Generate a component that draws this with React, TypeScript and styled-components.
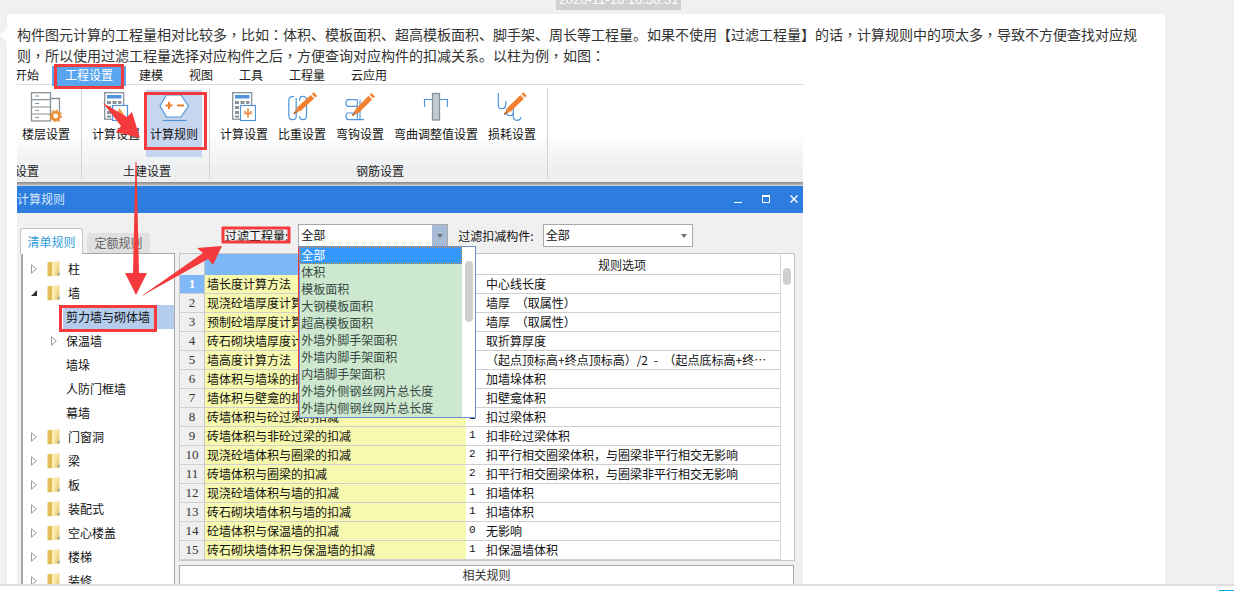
import React from "react";
import styled, { createGlobalStyle } from "styled-components";

const GlobalStyle = createGlobalStyle`
  html, body {
    margin: 0;
    padding: 0;
    background: #f0f0f0;
  }
  * {
    box-sizing: border-box;
  }
`;

const Page = styled.div`
  display: flex;
  flex-direction: column;
  width: 1234px;
  height: 591px;
  overflow: hidden;
  background: #f0f0f0;
  font-family: "Noto Sans CJK SC", "Liberation Sans", sans-serif;
`;

const Stamp = styled.div`
  flex: none;
  width: 125px;
  height: 20px;
  margin: -10px 0 4px 556px;
  background: #d0d0d0;
  color: #fff;
  font: 13px/20px "Liberation Sans", sans-serif;
  text-align: center;
`;

const Bubble = styled.div`
  position: relative;
  flex: 1;
  min-height: 0;
  display: flex;
  flex-direction: column;
  width: 1158px;
  margin-left: 7px;
  padding: 10px 10px 0;
  background: #fff;
  border-radius: 3px 3px 0 0;

  &::before {
    content: "";
    position: absolute;
    left: -7px;
    top: 14px;
    border-style: solid;
    border-width: 7px 7px 7px 0;
    border-color: transparent #fff transparent transparent;
  }
`;

const Paragraph = styled.p`
  flex: none;
  margin: 0;
  color: #333;
  font-size: 14px;
  line-height: 21px;
  white-space: nowrap;
`;

// the reference sets its commas and colons mid-cell, the other marks low-left
const Mid = styled.span`
  font-family: "Noto Sans CJK TC", sans-serif;
`;

const Shot = styled.div`
  position: relative;
  flex: 1;
  min-height: 0;
  width: 786px;
`;

const ShotClip = styled.div`
  display: flex;
  flex-direction: column;
  height: 100%;
  overflow: hidden;
  color: #111;
  font-size: 12px;
  line-height: 16px;
  white-space: nowrap;
`;

const Marks = styled.svg`
  position: absolute;
  left: 0;
  top: 0;
  overflow: visible;
  pointer-events: none;
`;

const Menu = styled.div`
  flex: none;
  display: flex;
  height: 18px;
  margin-left: -15px;
`;

const MenuItem = styled.div<{ $active?: boolean }>`
  height: ${({ $active }) => ($active ? "20px" : "18px")};
  padding: 1px 13px;
  position: relative;
  background: ${({ $active }) => ($active ? "#5aa5f0" : "transparent")};
  color: ${({ $active }) => ($active ? "#fff" : "#222")};
`;

const Ribbon = styled.div`
  flex: none;
  display: flex;
  height: 98px;
  border-top: 1px solid #dcdcdc;
  background: linear-gradient(#fff 0%, #fff 50%, #edeff0 85%, #edeff0 100%);
`;

const RibbonGroup = styled.div<{ $width: number; $pad?: number }>`
  display: flex;
  flex-direction: column;
  width: ${({ $width }) => $width}px;
  padding-left: ${({ $pad }) => $pad ?? 5}px;
  overflow: hidden;
  position: relative;

  &::after {
    content: "";
    position: absolute;
    right: 0;
    top: 3px;
    bottom: 3px;
    width: 1px;
    background: #d2d4d4;
  }
`;

const Tools = styled.div`
  display: flex;
  flex: none;
`;

const Tool = styled.div<{ $active?: boolean }>`
  height: 67px;
  margin: 5px 1px 0;
  padding: 2px 4px 0;
  display: flex;
  flex-direction: column;
  align-items: center;
  background: ${({ $active }) => ($active ? "#c6d6ef" : "transparent")};

  svg {
    flex: none;
    height: 30px;
    margin-bottom: 4px;
  }
`;

const GroupLabel = styled.div<{ $offset?: number }>`
  margin-top: auto;
  margin-bottom: 3px;
  margin-left: ${({ $offset }) => $offset ?? 0}px;
  line-height: 16px;
  color: #222;
`;

const RibbonEdge = styled.div`
  flex: none;
  height: 4px;
  background: linear-gradient(#8a8a8a, #b4b4b4 70%, #dfe4ec);
`;

const TitleBar = styled.div`
  flex: none;
  display: flex;
  align-items: center;
  gap: 20px;
  height: 27px;
  padding: 0 5px 1px 0;
  background: #2d7de0;
  color: #dbe9fa;
`;

const TitleText = styled.div`
  margin-right: auto;
`;

const Dialog = styled.div`
  flex: 1;
  min-height: 0;
  display: flex;
  background: #f0f0f0;
`;

const LeftPane = styled.div`
  flex: none;
  display: flex;
  flex-direction: column;
  width: 162px;
  padding-top: 15px;
`;

const TabBar = styled.div`
  flex: none;
  display: flex;
  align-items: flex-end;
  gap: 4px;
  height: 25px;
  margin-left: 3px;
`;

const Tab = styled.div<{ $active?: boolean }>`
  width: 63px;
  height: ${({ $active }) => ($active ? "26px" : "20px")};
  margin-bottom: ${({ $active }) => ($active ? "-1px" : "0")};
  position: relative;
  z-index: ${({ $active }) => ($active ? 1 : 0)};
  text-align: center;
  line-height: ${({ $active }) => ($active ? "26px" : "20px")};
  border-radius: 3px 3px 0 0;
  background: ${({ $active }) => ($active ? "#fff" : "#e0e0e0")};
  border: ${({ $active }) => ($active ? "1px solid #c4c4c4" : "none")};
  border-bottom: none;
  color: ${({ $active }) => ($active ? "#2f9bd8" : "#666")};
`;

const Tree = styled.div`
  flex: 1;
  min-height: 0;
  width: 154px;
  margin-left: 4px;
  padding-top: 3px;
  overflow: hidden;
  background: #fff;
  border: 1px solid #a8a8a8;
  border-left-width: 2px;
  border-bottom: none;
`;

const TreeRow = styled.div<{ $child?: boolean }>`
  display: flex;
  align-items: center;
  height: 24px;
  padding-left: ${({ $child }) => ($child ? "28px" : "8px")};
`;

const Expander = styled.span<{ $child?: boolean }>`
  flex: none;
  display: flex;
  align-items: center;
  width: ${({ $child }) => ($child ? "12px" : "16px")};
`;

const TreeText = styled.span<{ $selected?: boolean; $child?: boolean }>`
  flex: 1;
  align-self: stretch;
  line-height: 24px;
  padding-left: ${({ $child }) => ($child ? "3px" : "8px")};
  background: ${({ $selected }) => ($selected ? "#b4cdec" : "transparent")};
`;

const RightPane = styled.div`
  flex: none;
  display: flex;
  flex-direction: column;
  width: 616px;
`;

const FilterRow = styled.div`
  flex: none;
  display: flex;
  align-items: center;
  height: 23px;
  margin: 11px 0 6px;
  padding-left: 46px;
`;

const FilterLabel = styled.span<{ $gap: number }>`
  margin-right: ${({ $gap }) => $gap}px;
`;

const Combo = styled.div<{ $gap?: number }>`
  position: relative;
  display: flex;
  align-items: center;
  width: 150px;
  height: 23px;
  margin-right: ${({ $gap }) => $gap ?? 0}px;
  padding: 0 0 1px 2px;
  background: #fff;
  border: 1px solid #a9a9a9;
`;

const ComboArrow = styled.span<{ $open?: boolean }>`
  position: absolute;
  right: 0;
  top: 0;
  bottom: 0;
  width: 15px;
  display: flex;
  align-items: center;
  justify-content: center;
  background: ${({ $open }) => ($open ? "#a8bcd8" : "transparent")};

  &::after {
    content: "";
    border-style: solid;
    border-width: 4px 3.5px 0;
    border-color: #6f6f6f transparent transparent;
  }
`;

const DropDown = styled.div`
  position: absolute;
  z-index: 2;
  left: 0;
  top: 21px;
  display: flex;
  width: 177px;
  height: 172px;
  background: #fff;
  border: 1px solid #6a8fd5;
`;

const DropList = styled.div`
  width: 162px;
  overflow: hidden;
  background: #cce8cf;
`;

const DropItem = styled.div<{ $selected?: boolean }>`
  height: 17px;
  padding-left: 1px;
  line-height: 16px;
  color: ${({ $selected }) => ($selected ? "#fff" : "#3a4a44")};
  background: ${({ $selected }) => ($selected ? "#3399ff" : "transparent")};
  outline: ${({ $selected }) => ($selected ? "1px dotted #d98a3a" : "none")};
  outline-offset: -1px;
`;

const DropThumb = styled.div`
  width: 8px;
  height: 61px;
  margin: 14px 0 0 3px;
  border-radius: 4px;
  background: #cfcfcf;
`;

const GridBox = styled.div`
  flex: none;
  display: flex;
  height: 308px;
  background: #fff;
  border: 1px solid #c6c6c6;
`;

const GridBody = styled.div`
  flex: 1;
`;

const GridRow = styled.div<{ $header?: boolean }>`
  display: grid;
  grid-template-columns: 25px 261px 10px 304px;
  height: ${({ $header }) => ($header ? "21px" : "19px")};
  line-height: 17px;
  border-bottom: 1px solid #cfcfcf;
`;

const NumCell = styled.div<{ $current?: boolean }>`
  text-align: center;
  line-height: 18px;
  border-right: 1px solid #c6c6c6;
  background: ${({ $current }) => ($current ? "#7fb8f7" : "#efefef")};
  color: ${({ $current }) => ($current ? "#fff" : "#333")};
  font-weight: ${({ $current }) => ($current ? 700 : 400)};
  font-family: "Liberation Serif", serif;
  font-size: 13px;
`;

const NameCell = styled.div`
  padding-left: 2px;
  background: #f7f9ae;
  overflow: hidden;
`;

const HeaderBlue = styled.div`
  grid-column: span 2;
  background: #7fb8f7;
`;

const HeaderOption = styled.div`
  padding-right: 12px;
  line-height: 22px;
  text-align: center;
  color: #222;
`;

const ValueCell = styled.div`
  padding-left: 3px;
  font-family: "Liberation Mono", monospace;
  font-size: 11px;
`;

const OptionCell = styled.div`
  padding-left: 10px;
  word-spacing: 3px;
  overflow: hidden;
`;

const GridScroll = styled.div`
  flex: none;
  width: 14px;
  border-left: 1px solid #d8d8d8;
`;

const GridThumb = styled.div`
  width: 8px;
  height: 17px;
  margin: 14px 0 0 2px;
  border-radius: 4px;
  background: #cfcfcf;
`;

const RelatedButton = styled.div`
  flex: none;
  height: 24px;
  width: 615px;
  margin-top: 4px;
  line-height: 18px;
  text-align: center;
  color: #333;
  background: #fff;
  border: 1px solid #a9a9a9;
`;

const Footer = styled.div`
  flex: none;
  display: flex;
  justify-content: flex-end;
  align-items: flex-end;
  height: 7px;
  background: #fff;
  border-top: 2px solid #dedede;
`;

const FooterMark = styled.div`
  width: 15px;
  height: 1px;
  background: #00a8e8;
`;

const BLUE = "#4f94dc";
const ORANGE = "#f08030";
const GREY = "#87929a";

const Pencil = ({ x1, y1, x2, y2 }: { x1: number; y1: number; x2: number; y2: number }) => {
  const at = (t: number) => ({ x: x1 + (x2 - x1) * t, y: y1 + (y2 - y1) * t });
  const neck = at(0.1);
  const waist = at(0.84);
  const cap = at(0.9);
  const tip = at(-0.14);
  return (
    <g>
      <line x1={neck.x} y1={neck.y} x2={waist.x} y2={waist.y} stroke={ORANGE} strokeWidth={5} />
      <line x1={cap.x} y1={cap.y} x2={x2} y2={y2} stroke={ORANGE} strokeWidth={5} />
      <line x1={x1} y1={y1} x2={neck.x} y2={neck.y} stroke={ORANGE} strokeWidth={3.5} />
      <line x1={x1} y1={y1} x2={tip.x} y2={tip.y} stroke="#b5652c" strokeWidth={1.8} />
    </g>
  );
};

const TableIcon = () => (
  <svg width="32" height="30" viewBox="0 0 32 30" fill="none">
    <path d="M21 6.500h8.500v15" stroke={GREY} strokeWidth="1.300" />
    <rect x="1.500" y="0.700" width="19" height="28.300" fill="#fff" stroke={GREY} strokeWidth="1.300" />
    <path d="M1.500 7.700h19M1.500 15h19M1.500 22h19" stroke={GREY} strokeWidth="1.200" />
    <path d="M5 4h4M5 11.500h4M5 18.500h4M5 25.500h4" stroke={GREY} strokeWidth="1.200" />
    <circle cx="25.700" cy="24" r="3.800" stroke="#e98f33" strokeWidth="2.800" />
    <circle cx="25.700" cy="24" r="6" stroke="#e98f33" strokeWidth="1.200" strokeDasharray="2 2.700" />
  </svg>
);

const CalcBody = ({ x }: { x: number }) => (
  <g transform={`translate(${x} 0)`}>
    <rect x="0.700" y="0.700" width="19" height="26.500" fill="#fff" stroke={GREY} strokeWidth="1.300" />
    <rect x="3" y="3" width="14.500" height="3.500" fill={BLUE} />
    <path d="M3 9h4v3H3zM8.500 9h4v3h-4zM14 9h3.500v3H14zM3 14h4v3H3zM8.500 14h4v3h-4zM3 19h4v3H3zM3 23.500h4v2H3z" fill={GREY} />
  </g>
);

const CalcIcon = () => (
  <svg width="26" height="30" viewBox="0 0 26 30" fill="none">
    <CalcBody x={1} />
    <rect x="9.500" y="13.500" width="15" height="15" fill="#fff" stroke={BLUE} strokeWidth="1.200" />
    <path d="M12 27c-1-4 3-5 4-11 3 3 6 6 5 11z" fill="#f29a4a" />
    <path d="M15 27c0-2 1-3 2-5 1 2 2 3 1.500 5z" fill="#fbe2b8" />
  </svg>
);

const RuleIcon = () => (
  <svg width="30" height="30" viewBox="0 0 30 30" fill="none">
    <path d="M1 14 7.500 3H22l7.500 11L22 25H7.500z" fill="#fff" stroke={BLUE} strokeWidth="1.200" />
    <path d="M6.500 13.500h7M10 10v7M18 13.500h7" stroke={ORANGE} strokeWidth="2" />
    <path d="M3.500 28.500h24" stroke={BLUE} strokeWidth="1.200" />
  </svg>
);

const CalcLinkIcon = () => (
  <svg width="24" height="30" viewBox="0 0 24 30" fill="none">
    <CalcBody x={0} />
    <rect x="8.500" y="13.500" width="15" height="15" fill="#fff" stroke={BLUE} strokeWidth="1.200" />
    <path d="M16 16.500v9M13 19v2.500h6V19" stroke={ORANGE} strokeWidth="1.500" />
  </svg>
);

const DensityIcon = () => (
  <svg width="29" height="30" viewBox="0 0 29 30" fill="none">
    <path d="M6 4.300C3 4.300 0.800 5.500 0.800 8.700v14c0 3 1.500 5 3.700 5s3.700-1 3.700-3.400V6" stroke={BLUE} strokeWidth="1.200" />
    <path d="M11.500 8.700c0-3 1-4.400 3-4.400s4 1.400 4 3.400v16.600c0 2.400-1.500 3.400-3.300 3.400s-3.700-1-3.700-3.400" stroke={BLUE} strokeWidth="1.200" />
    <Pencil x1={8.500} y1={19.300} x2={27.500} y2={2} />
  </svg>
);

const HookIcon = () => (
  <svg width="30" height="30" viewBox="0 0 30 30" fill="none">
    <path d="M12.300 7.700H3.300C1.800 7.700 1 9.500 1 11s0.800 3.300 2.300 3.300h9" stroke={BLUE} strokeWidth="1.200" />
    <path d="M12.300 21H3.300C1.800 21 1 22.700 1 24.300s0.800 3.400 2.300 3.400H19" stroke={BLUE} strokeWidth="1.200" />
    <path d="M12.300 7.700v20M15 7.700v20" stroke={BLUE} strokeWidth="1.100" />
    <Pencil x1={10} y1={21} x2={28.300} y2={2.700} />
  </svg>
);

const BendIcon = () => (
  <svg width="26" height="30" viewBox="0 0 26 30" fill="none">
    <path d="M1.500 15V7.500h23V15" stroke={BLUE} strokeWidth="1.200" />
    <rect x="9.500" y="1.500" width="7" height="26.500" fill="#c3cbd1" stroke={GREY} strokeWidth="1.300" />
  </svg>
);

const LossIcon = () => (
  <svg width="30" height="30" viewBox="0 0 30 30" fill="none">
    <path d="M1.300 1v11.700c0 2.700 1.500 4 3.400 4s4-1.300 4-4V9.300" stroke={BLUE} strokeWidth="1.200" />
    <path d="M9.700 16.700V21c0 1.800 1.500 2.700 3.300 2.700s3.300-0.900 3.300-2.700" stroke={BLUE} strokeWidth="1.200" />
    <path d="M16.300 14.300v10c0 2.400 1.500 4 3.400 4s4-1 4-3" stroke={BLUE} strokeWidth="1.200" />
    <Pencil x1={9.700} y1={20} x2={28} y2={2} />
  </svg>
);

const FolderIcon = () => (
  <svg width="13" height="16" viewBox="0 0 13 16" fill="none">
    <defs>
      <linearGradient id="folderFill" x1="0" y1="0" x2="1" y2="1">
        <stop offset="0" stopColor="#fdf3c0" />
        <stop offset="1" stopColor="#e9c768" />
      </linearGradient>
    </defs>
    <path d="M0.500 1.500 5 0.500v14.500l-4.500 0.500z" fill="#e3bd58" />
    <path d="M5 0.500h7.500V15H5z" fill="url(#folderFill)" />
    <path d="M5 2 8 3v12H5z" fill="#fbeeb0" />
    <path d="M11 12h1.500v2H11z" fill="#5aa5d0" />
  </svg>
);

const Closed = () => (
  <svg width="6" height="10" viewBox="0 0 6 10" fill="none">
    <path d="M0.500 0.800 5.300 5 0.500 9.200z" fill="#fff" stroke="#9a9a9a" />
  </svg>
);

const Opened = () => (
  <svg width="6" height="6" viewBox="0 0 6 6">
    <path d="M6 0v6H0z" fill="#333" />
  </svg>
);

const treeItems = [
  { label: "柱" },
  { label: "墙", open: true },
  { label: "剪力墙与砌体墙", child: true, selected: true, leaf: true },
  { label: "保温墙", child: true },
  { label: "墙垛", child: true, leaf: true },
  { label: "人防门框墙", child: true, leaf: true },
  { label: "幕墙", child: true, leaf: true },
  { label: "门窗洞" },
  { label: "梁" },
  { label: "板" },
  { label: "装配式" },
  { label: "空心楼盖" },
  { label: "楼梯" },
  { label: "装修" },
];

const dropItems = [
  "全部",
  "体积",
  "模板面积",
  "大钢模板面积",
  "超高模板面积",
  "外墙外脚手架面积",
  "外墙内脚手架面积",
  "内墙脚手架面积",
  "外墙外侧钢丝网片总长度",
  "外墙内侧钢丝网片总长度",
];

const rows = [
  ["墙长度计算方法", "", "中心线长度"],
  ["现浇砼墙厚度计算方法", "", "墙厚 （取属性）"],
  ["预制砼墙厚度计算方法", "", "墙厚 （取属性）"],
  ["砖石砌块墙厚度计算方法", "", "取折算厚度"],
  ["墙高度计算方法", "", "（起点顶标高+终点顶标高）/2 - （起点底标高+终…"],
  ["墙体积与墙垛的扣减", "", "加墙垛体积"],
  ["墙体积与壁龛的扣减", "", "扣壁龛体积"],
  ["砖墙体积与砼过梁的扣减", "1", "扣过梁体积"],
  ["砖墙体积与非砼过梁的扣减", "1", "扣非砼过梁体积"],
  ["现浇砼墙体积与圈梁的扣减", "2", "扣平行相交圈梁体积，与圈梁非平行相交无影响"],
  ["砖墙体积与圈梁的扣减", "2", "扣平行相交圈梁体积，与圈梁非平行相交无影响"],
  ["现浇砼墙体积与墙的扣减", "1", "扣墙体积"],
  ["砖石砌块墙体积与墙的扣减", "1", "扣墙体积"],
  ["砼墙体积与保温墙的扣减", "0", "无影响"],
  ["砖石砌块墙体积与保温墙的扣减", "1", "扣保温墙体积"],
];

const RED = "#f43a3c";

// red notes someone drew over the screenshot, in page coordinates
const Annotations = () => (
  <Marks width="786" height="518" viewBox="17 66 786 518" fill="none">
    <rect x="55.500" y="65.500" width="67" height="22" stroke={RED} strokeWidth="3" />
    <rect x="145.500" y="93.500" width="60" height="55" stroke={RED} strokeWidth="3" />
    <rect x="223" y="228" width="66" height="14" stroke={RED} strokeWidth="3" />
    <rect x="60.500" y="306.500" width="95" height="24" stroke={RED} strokeWidth="3" />
    <rect x="299.500" y="248.500" width="146" height="167" stroke={RED} strokeWidth="3" />
    <path d="M103 103 127 117 132 112 140 138 116 132 121 126z" fill={RED} />
    <path d="M135.500 162h1l2.500 111h8L136 295 125 273h8z" fill={RED} />
    <path d="M140 297 203 253 197 248 222 246 213 265 208 259z" fill={RED} />
  </Marks>
);

export default function App() {
  return (
    <Page>
      <GlobalStyle />
      <Stamp>2020-11-16 16:56:31</Stamp>
      <Bubble>
        <Paragraph>
          构件图元计算的工程量相对比较多<Mid>，</Mid>比如<Mid>：</Mid>体积、模板面积、超高模板面积、脚手架、周长等工程量。如果不使用【过滤工程量】的话<Mid>，</Mid>计算规则中的项太多<Mid>，</Mid>导致不方便查找对应规
          <br />
          则<Mid>，</Mid>所以使用过滤工程量选择对应构件之后<Mid>，</Mid>方便查询对应构件的扣减关系。以柱为例<Mid>，</Mid>如图<Mid>：</Mid>
        </Paragraph>
        <Shot>
          <ShotClip>
            <Menu>
              <MenuItem>开始</MenuItem>
              <MenuItem $active>工程设置</MenuItem>
              <MenuItem>建模</MenuItem>
              <MenuItem>视图</MenuItem>
              <MenuItem>工具</MenuItem>
              <MenuItem>工程量</MenuItem>
              <MenuItem>云应用</MenuItem>
            </Menu>
            <Ribbon>
              <RibbonGroup $width={65} $pad={0}>
                <Tools>
                  <Tool>
                    <TableIcon />
                    楼层设置
                  </Tool>
                </Tools>
                <GroupLabel $offset={-2}>设置</GroupLabel>
              </RibbonGroup>
              <RibbonGroup $width={128}>
                <Tools>
                  <Tool>
                    <CalcIcon />
                    计算设置
                  </Tool>
                  <Tool $active>
                    <RuleIcon />
                    计算规则
                  </Tool>
                </Tools>
                <GroupLabel $offset={36}>土建设置</GroupLabel>
              </RibbonGroup>
              <RibbonGroup $width={338}>
                <Tools>
                  <Tool>
                    <CalcLinkIcon />
                    计算设置
                  </Tool>
                  <Tool>
                    <DensityIcon />
                    比重设置
                  </Tool>
                  <Tool>
                    <HookIcon />
                    弯钩设置
                  </Tool>
                  <Tool>
                    <BendIcon />
                    弯曲调整值设置
                  </Tool>
                  <Tool>
                    <LossIcon />
                    损耗设置
                  </Tool>
                </Tools>
                <GroupLabel $offset={141}>钢筋设置</GroupLabel>
              </RibbonGroup>
            </Ribbon>
            <RibbonEdge />
            <TitleBar>
              <TitleText>计算规则</TitleText>
              <svg width="8" height="8" viewBox="0 0 8 8">
                <path d="M0 7h8v1.500H0z" fill="#fff" />
              </svg>
              <svg width="8" height="8" viewBox="0 0 8 8" fill="none">
                <path d="M0.500 1h7v6.500h-7z" stroke="#fff" />
                <path d="M0 1h8" stroke="#fff" strokeWidth="2" />
              </svg>
              <svg width="8" height="8" viewBox="0 0 8 8" fill="none">
                <path d="M0.500 0.500l7 7M7.500 0.500l-7 7" stroke="#fff" strokeWidth="1.400" />
              </svg>
            </TitleBar>
            <Dialog>
              <LeftPane>
                <TabBar>
                  <Tab $active>清单规则</Tab>
                  <Tab>定额规则</Tab>
                </TabBar>
                <Tree>
                  {treeItems.map((item) => (
                    <TreeRow key={item.label} $child={item.child}>
                      <Expander $child={item.child}>
                        {!item.leaf && (item.open ? <Opened /> : <Closed />)}
                      </Expander>
                      {!item.child && <FolderIcon />}
                      <TreeText $child={item.child} $selected={item.selected}>
                        {item.label}
                      </TreeText>
                    </TreeRow>
                  ))}
                </Tree>
              </LeftPane>
              <RightPane>
                <FilterRow>
                  <FilterLabel $gap={10}>过滤工程量:</FilterLabel>
                  <Combo $gap={10}>
                    全部
                    <ComboArrow $open />
                    <DropDown>
                      <DropList>
                        {dropItems.map((item, index) => (
                          <DropItem key={item} $selected={index === 0}>
                            {item}
                          </DropItem>
                        ))}
                      </DropList>
                      <DropThumb />
                    </DropDown>
                  </Combo>
                  <FilterLabel $gap={9}>过滤扣减构件:</FilterLabel>
                  <Combo>
                    全部
                    <ComboArrow />
                  </Combo>
                </FilterRow>
                <GridBox>
                  <GridBody>
                    <GridRow $header>
                      <NumCell />
                      <HeaderBlue />
                      <HeaderOption>规则选项</HeaderOption>
                    </GridRow>
                    {rows.map(([name, value, option], index) => (
                      <GridRow key={index}>
                        <NumCell $current={index === 0}>{index + 1}</NumCell>
                        <NameCell>{name}</NameCell>
                        <ValueCell>{value}</ValueCell>
                        <OptionCell>{option}</OptionCell>
                      </GridRow>
                    ))}
                  </GridBody>
                  <GridScroll>
                    <GridThumb />
                  </GridScroll>
                </GridBox>
                <RelatedButton>相关规则</RelatedButton>
              </RightPane>
            </Dialog>
          </ShotClip>
          <Annotations />
        </Shot>
      </Bubble>
      <Footer>
        <FooterMark />
      </Footer>
    </Page>
  );
}
